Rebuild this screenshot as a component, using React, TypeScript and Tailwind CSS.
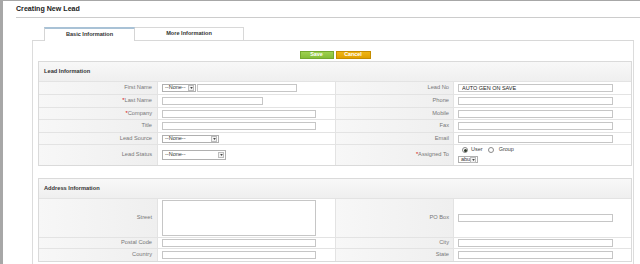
import React from 'react';

const font = { fontFamily: '"Liberation Sans", Arial, sans-serif' };

function TextBox({ w, h = 8, value = '' }: { w: number; h?: number; value?: string }) {
  return (
    <input
      readOnly
      value={value}
      style={{ width: w, height: h }}
      className="border border-[#c6c6c6] bg-white p-0 pl-[3px] text-[5.5px] text-[#222] outline-none"
    />
  );
}

function Select({ w, h = 8, label }: { w: number; h?: number; label: string }) {
  return (
    <div
      style={{ width: w, height: h }}
      className="flex items-center border border-[#b0b0b0] bg-white"
    >
      <span className="flex-1 pl-[2px] text-[5.5px] leading-none text-[#333]">{label}</span>
      <span className="mr-[1px] flex h-[6px] w-[6px] items-center justify-center border border-[#bdbdbd] bg-[#f2f2f2]">
        <svg width="3" height="2" viewBox="0 0 4 3">
          <path d="M0 0h4L2 3z" fill="#444" />
        </svg>
      </span>
    </div>
  );
}

function Radio({ checked }: { checked?: boolean }) {
  return (
    <span className="flex h-[6px] w-[6px] items-center justify-center rounded-full border border-[#8a8a8a] bg-white">
      {checked && <span className="h-[3px] w-[3px] rounded-full bg-[#2f3a2a]" />}
    </span>
  );
}

function Label({ text, req }: { text: string; req?: boolean }) {
  return (
    <span className="text-[5.7px] leading-none text-[#777]">
      {req && <span className="text-[#d40000]">*</span>}
      {text}
    </span>
  );
}

interface RowProps {
  h: number;
  l1: React.ReactNode;
  d1: React.ReactNode;
  l2: React.ReactNode;
  d2: React.ReactNode;
  first?: boolean;
  d2Top?: boolean;
}

function Row({ h, l1, d1, l2, d2, first, d2Top }: RowProps) {
  return (
    <div
      style={{ height: h }}
      className={`flex ${first ? '' : 'border-t'} border-[#e3e3e3]`}
    >
      <div className="flex w-[119px] items-center justify-end border-r border-[#e3e3e3] bg-gradient-to-r from-[#f7f7f7] to-[#efefef] pr-[5px]">
        {l1}
      </div>
      <div className="flex w-[178px] items-center border-r border-[#e3e3e3] bg-white pl-[4px]">{d1}</div>
      <div className="flex w-[118px] items-center justify-end border-r border-[#e3e3e3] bg-gradient-to-r from-[#f7f7f7] to-[#efefef] pr-[4px]">
        {l2}
      </div>
      <div className={`flex flex-1 bg-white pl-[4px] ${d2Top ? 'items-start' : 'items-center'}`}>{d2}</div>
    </div>
  );
}

function SectionHeader({ title }: { title: string }) {
  return (
    <div className="flex h-[20px] items-center border-b border-[#e3e3e3] bg-gradient-to-b from-[#f8f8f8] to-[#efefef] pl-[5px]">
      <span className="text-[5.7px] font-bold leading-none text-[#333]">{title}</span>
    </div>
  );
}

export default function App() {
  return (
    <div
      style={font}
      className="flex h-[264px] w-[640px] flex-col overflow-hidden border-l-[3px] border-t border-[#a7a7a7] bg-white"
    >
      {/* Title */}
      <div className="ml-[13px] flex h-[17px] items-center border-b border-[#cccccc] pt-[2px]">
        <span className="text-[7.1px] font-bold leading-none text-[#222]">Creating New Lead</span>
      </div>

      {/* Tabs */}
      <div className="ml-[29px] mt-[9px] flex h-[14px] w-[602px]">
        <div className="w-[12px] border-b border-[#d8d8d8]" />
        <div className="flex w-[91px] items-center justify-center border-x border-t-2 border-x-[#d5d5d5] border-t-[#a9c2d6] bg-white">
          <span className="text-[5.6px] font-bold leading-none text-[#333]">Basic Information</span>
        </div>
        <div className="flex w-[109px] items-center justify-center border-b border-r border-t border-[#d8d8d8] bg-white">
          <span className="text-[5.6px] font-bold leading-none text-[#333]">More Information</span>
        </div>
        <div className="flex-1 border-b border-[#d8d8d8]" />
      </div>

      {/* Panel */}
      <div className="ml-[29px] flex w-[602px] flex-1 flex-col border-x border-[#dcdcdc]">
        <div className="flex justify-center gap-[2px] pl-[4px] pt-[10px]">
          <div className="flex h-[8px] w-[34px] items-center justify-center border border-[#74a82e] bg-gradient-to-b from-[#9ed14f] to-[#85bd38]">
            <span className="text-[5.4px] font-bold leading-none text-white">Save</span>
          </div>
          <div className="flex h-[8px] w-[35px] items-center justify-center border border-[#c48c00] bg-gradient-to-b from-[#f0b514] to-[#e0a000]">
            <span className="text-[5.4px] font-bold leading-none text-white">Cancel</span>
          </div>
        </div>

        {/* Lead Information */}
        <div className="ml-[5px] mt-[2px] w-[594px] border border-[#dadada]">
          <SectionHeader title="Lead Information" />
          <Row
            first
            h={12}
            l1={<Label text="First Name" />}
            d1={
              <div className="flex gap-[1px]">
                <Select w={34} label="--None--" />
                <TextBox w={100} />
              </div>
            }
            l2={<Label text="Lead No" />}
            d2={<TextBox w={155} value="AUTO GEN ON SAVE" />}
          />
          <Row
            h={13}
            l1={<Label text="Last Name" req />}
            d1={<TextBox w={101} />}
            l2={<Label text="Phone" />}
            d2={<TextBox w={155} />}
          />
          <Row
            h={12}
            l1={<Label text="Company" req />}
            d1={<TextBox w={154} />}
            l2={<Label text="Mobile" />}
            d2={<TextBox w={155} />}
          />
          <Row
            h={13}
            l1={<Label text="Title" />}
            d1={<TextBox w={154} />}
            l2={<Label text="Fax" />}
            d2={<TextBox w={155} />}
          />
          <Row
            h={12}
            l1={<Label text="Lead Source" />}
            d1={<Select w={57} label="--None--" />}
            l2={<Label text="Email" />}
            d2={<TextBox w={155} />}
          />
          <Row
            h={21}
            d2Top
            l1={<Label text="Lead Status" />}
            d1={<Select w={64} h={10} label="--None--" />}
            l2={<Label text="Assigned To" req />}
            d2={
              <div className="flex flex-col pt-[2px]">
                <div className="flex h-[6px] items-center pl-[4px]">
                  <Radio checked />
                  <span className="ml-[3px] text-[5.5px] leading-none text-[#444]">User</span>
                  <span className="ml-[5px]">
                    <Radio />
                  </span>
                  <span className="ml-[5px] text-[5.5px] leading-none text-[#444]">Group</span>
                </div>
                <div className="mt-[3px]">
                  <Select w={20} h={7} label="abu" />
                </div>
              </div>
            }
          />
        </div>

        {/* Address Information */}
        <div className="ml-[5px] mt-[12px] w-[594px] border border-[#dadada]">
          <SectionHeader title="Address Information" />
          <Row
            first
            h={38}
            l1={<Label text="Street" />}
            d1={
              <textarea
                readOnly
                className="h-[36px] w-[154px] resize-none border border-[#c6c6c6] bg-white p-0 outline-none"
              />
            }
            l2={<Label text="PO Box" />}
            d2={<TextBox w={155} />}
          />
          <Row
            h={11}
            l1={<Label text="Postal Code" />}
            d1={<TextBox w={154} />}
            l2={<Label text="City" />}
            d2={<TextBox w={155} />}
          />
          <Row
            h={13}
            l1={<Label text="Country" />}
            d1={<TextBox w={154} />}
            l2={<Label text="State" />}
            d2={<TextBox w={155} />}
          />
        </div>
      </div>
    </div>
  );
}
